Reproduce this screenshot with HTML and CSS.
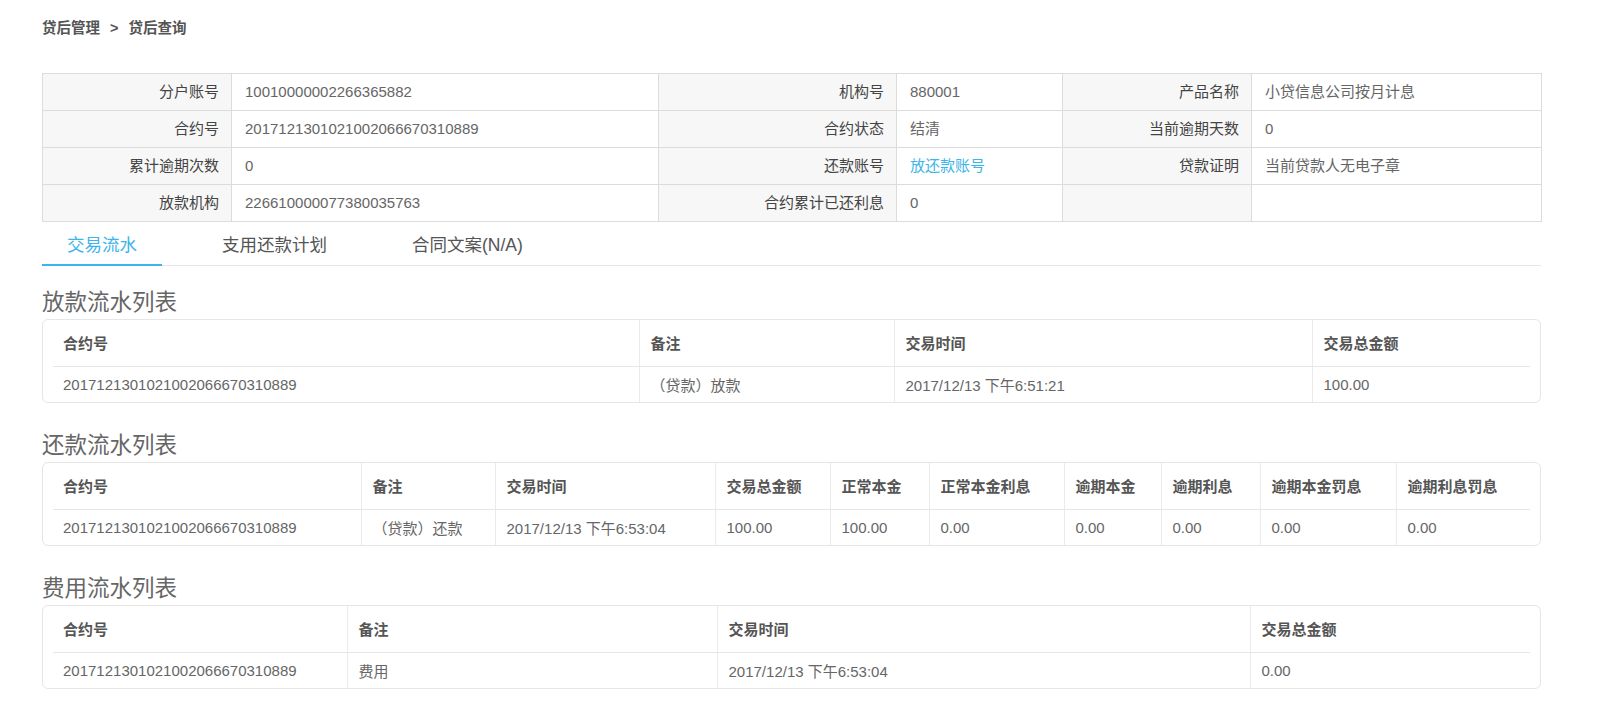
FILE: index.html
```html
<!DOCTYPE html>
<html lang="zh-CN">
<head>
<meta charset="utf-8">
<title>贷后查询</title>
<link rel="stylesheet" href="styles.css">
</head>
<body>
<div class="page">
  <div class="crumb"><span>贷后管理</span><span class="sep">&gt;</span><span>贷后查询</span></div>

  <table class="info">
    <colgroup>
      <col class="c189"><col class="c427"><col class="c238"><col class="c166"><col class="c189"><col class="c290">
    </colgroup>
    <tr>
      <th>分户账号</th><td>10010000002266365882</td>
      <th>机构号</th><td>880001</td>
      <th>产品名称</th><td>小贷信息公司按月计息</td>
    </tr>
    <tr>
      <th>合约号</th><td>2017121301021002066670310889</td>
      <th>合约状态</th><td>结清</td>
      <th>当前逾期天数</th><td>0</td>
    </tr>
    <tr>
      <th>累计逾期次数</th><td>0</td>
      <th>还款账号</th><td><a class="link" href="#">放还款账号</a></td>
      <th>贷款证明</th><td>当前贷款人无电子章</td>
    </tr>
    <tr>
      <th>放款机构</th><td>226610000077380035763</td>
      <th>合约累计已还利息</th><td>0</td>
      <th></th><td></td>
    </tr>
  </table>

  <div class="tabs">
    <div class="tab active">交易流水</div>
    <div class="tab">支用还款计划</div>
    <div class="tab">合同文案(N/A)</div>
  </div>

  <section class="sec first">
    <h2 class="sec-title">放款流水列表</h2>
    <div class="card">
      <table class="grid">
        <colgroup><col class="w586"><col class="w255"><col class="w418"><col class="w218"></colgroup>
        <tr class="head"><th>合约号</th><th>备注</th><th>交易时间</th><th>交易总金额</th></tr>
        <tr><td>2017121301021002066670310889</td><td>（贷款）放款</td><td>2017/12/13 下午6:51:21</td><td>100.00</td></tr>
      </table>
    </div>
  </section>

  <section class="sec">
    <h2 class="sec-title">还款流水列表</h2>
    <div class="card">
      <table class="grid">
        <colgroup>
          <col class="w308"><col class="w134"><col class="w220"><col class="w115"><col class="w99">
          <col class="w135"><col class="w97"><col class="w99"><col class="w136"><col class="w134">
        </colgroup>
        <tr class="head"><th>合约号</th><th>备注</th><th>交易时间</th><th>交易总金额</th><th>正常本金</th><th>正常本金利息</th><th>逾期本金</th><th>逾期利息</th><th>逾期本金罚息</th><th>逾期利息罚息</th></tr>
        <tr><td>2017121301021002066670310889</td><td>（贷款）还款</td><td>2017/12/13 下午6:53:04</td><td>100.00</td><td>100.00</td><td>0.00</td><td>0.00</td><td>0.00</td><td>0.00</td><td>0.00</td></tr>
      </table>
    </div>
  </section>

  <section class="sec">
    <h2 class="sec-title">费用流水列表</h2>
    <div class="card">
      <table class="grid">
        <colgroup><col class="w294"><col class="w370"><col class="w533"><col class="w280"></colgroup>
        <tr class="head"><th>合约号</th><th>备注</th><th>交易时间</th><th>交易总金额</th></tr>
        <tr><td>2017121301021002066670310889</td><td>费用</td><td>2017/12/13 下午6:53:04</td><td>0.00</td></tr>
      </table>
    </div>
  </section>
</div>
</body>
</html>
```

FILE: styles.css
```css
* { box-sizing: border-box; }
html, body { margin: 0; padding: 0; background: #fff; }
body {
  font-family: "Liberation Sans", "Noto Sans CJK SC", sans-serif;
  font-size: 15px;
  color: #666;
}
.page {
  width: 1499px;
  margin-left: 42px;
  padding-bottom: 30px;
}

/* breadcrumb */
.crumb {
  padding-top: 18px;
  height: 37px;
  line-height: 20px;
  font-size: 14.5px;
  font-weight: bold;
  color: #555;
  margin-bottom: 36px;
}
.crumb .sep { margin: 0 10px; }

/* info table */
.info {
  width: 1499px;
  table-layout: fixed;
  border-collapse: collapse;
}
.info th, .info td {
  border: 1px solid #dcdcdc;
  height: 37px;
  line-height: 20px;
  padding: 0 12px;
  font-size: 15px;
  white-space: nowrap;
  overflow: hidden;
}
.info th {
  background: #f7f7f7;
  text-align: right;
  font-weight: normal;
  color: #444;
}
.info td {
  text-align: left;
  color: #666;
  padding-left: 13px;
}
.c189 { width: 189px; }
.c427 { width: 427px; }
.c238 { width: 238px; }
.c166 { width: 166px; }
.c290 { width: 290px; }
.link { color: #3db4ea; text-decoration: none; }

/* tabs */
.tabs {
  display: flex;
  gap: 35px;
  border-bottom: 1px solid #e6e6e6;
  height: 44px;
}
.tab {
  padding: 4px 25px 0;
  height: 44px;
  line-height: 38px;
  font-size: 17.5px;
  color: #555;
  margin-bottom: -1px;
  border-bottom: 2px solid transparent;
}
.tab.active {
  color: #3db4ea;
  border-bottom-color: #3db4ea;
}

/* sections */
.sec { margin-top: 26px; }
.sec.first { margin-top: 20px; }
.sec-title {
  margin: 0;
  height: 33px;
  line-height: 33px;
  font-size: 22.5px;
  font-weight: normal;
  color: #666;
}
.card {
  border: 1px solid #e6e6e6;
  border-radius: 6px;
  padding: 0 10px;
}
.grid {
  width: 100%;
  table-layout: fixed;
  border-collapse: collapse;
}
.grid th, .grid td {
  text-align: left;
  padding: 0 11px;
  border-right: 1px solid #ebebeb;
  white-space: nowrap;
  overflow: hidden;
  font-size: 15px;
}
.grid th:first-child, .grid td:first-child { padding-left: 10px; }
.grid th:last-child, .grid td:last-child { border-right: 0; }
.grid .head th {
  height: 46px;
  border-bottom: 1px solid #e6e6e6;
  font-weight: bold;
  color: #555;
}
.grid td {
  height: 36px;
  color: #666;
}
.w586 { width: 586px; } .w255 { width: 255px; } .w418 { width: 418px; } .w218 { width: 218px; }
.w308 { width: 308px; } .w134 { width: 134px; } .w220 { width: 220px; } .w115 { width: 115px; }
.w99 { width: 99px; } .w135 { width: 135px; } .w97 { width: 97px; } .w136 { width: 136px; }
.w294 { width: 294px; } .w370 { width: 370px; } .w533 { width: 533px; } .w280 { width: 280px; }
```
